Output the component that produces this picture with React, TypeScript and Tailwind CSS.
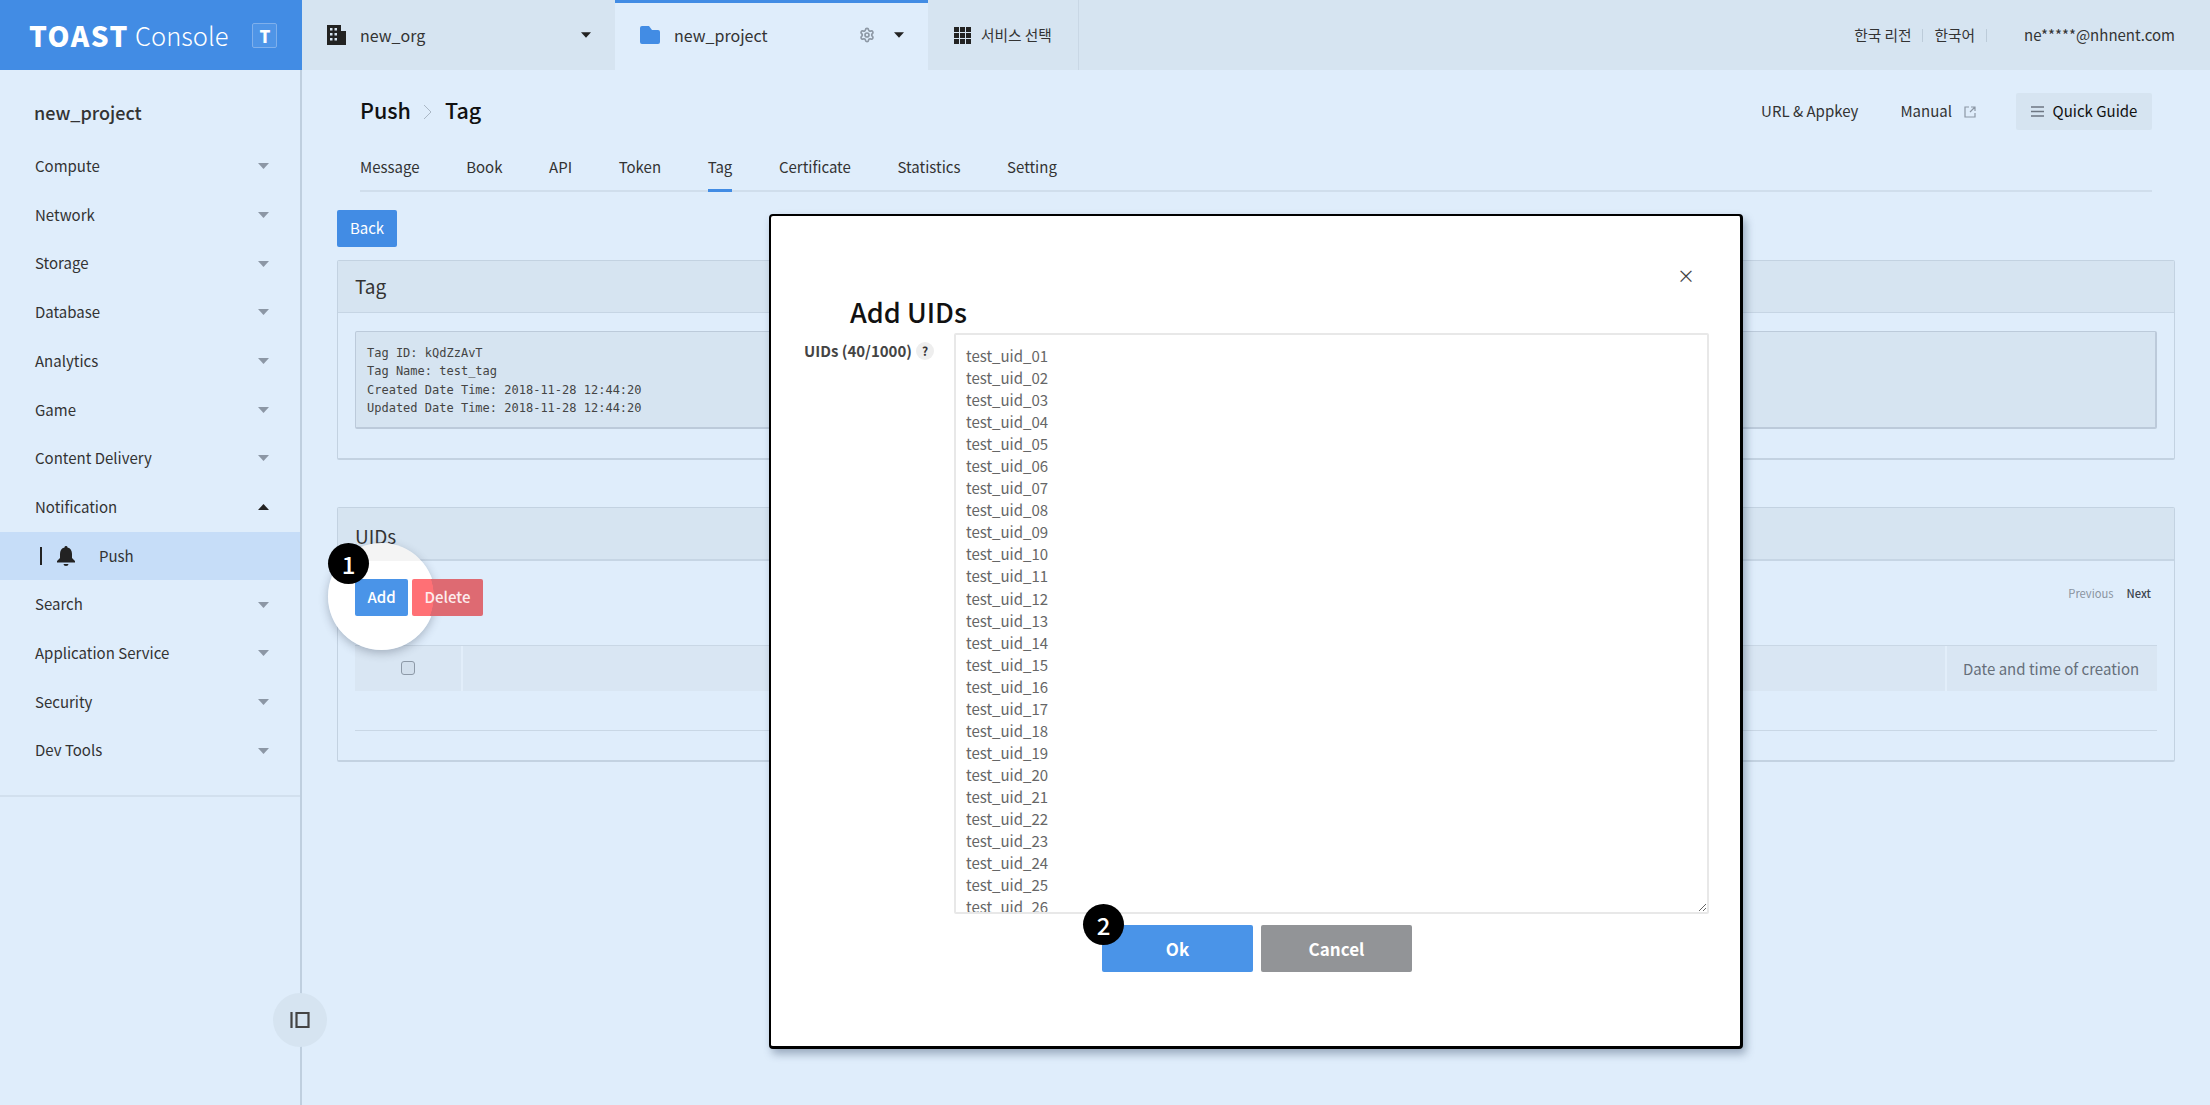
import { Settings } from "lucide-react";

const FONT = '"Noto Sans CJK KR", "Noto Sans", sans-serif';
const NAV = ["Compute", "Network", "Storage", "Database", "Analytics", "Game", "Content Delivery"];
const NAV2 = ["Search", "Application Service", "Security", "Dev Tools"];
const TABS = ["Message", "Book", "API", "Token", "Tag", "Certificate", "Statistics", "Setting"];
const UIDS = Array.from({ length: 40 }, (_, i) => `test_uid_${String(i + 1).padStart(2, "0")}`).join("\n");

function Caret({ up = false, color = "#8c97a5", w = 11, h = 6 }: { up?: boolean; color?: string; w?: number; h?: number }) {
  return (
    <svg width={w} height={h} viewBox="0 0 11 6" className="shrink-0">
      <path d={up ? "M5.5 0L11 6H0z" : "M0 0h11L5.5 6z"} fill={color} />
    </svg>
  );
}

function NavRow({ label }: { label: string }) {
  return (
    <div className="flex h-[48.7px] items-center justify-between pl-[35px] pr-[31px] text-[15px] text-[#333]">
      <span>{label}</span>
      <Caret />
    </div>
  );
}

function Badge({ n }: { n: string }) {
  return (
    <div className="flex h-[41px] w-[41px] items-center justify-center rounded-full bg-black text-[24px] font-medium text-white">
      {n}
    </div>
  );
}

export default function App() {
  return (
    <div className="relative flex h-[1105px] w-[2210px] flex-col overflow-hidden bg-[#dfedfb] text-[#333]" style={{ fontFamily: FONT }}>
      <header className="flex h-[70px] shrink-0 bg-[#d6e4f1]">
        <div className="flex w-[302px] items-center bg-[#428ce4] pl-[29px] text-white">
          <span className="w-[106px] text-[28px] leading-none font-black tracking-[1.500px]">TOAST</span>
          <span className="text-[25.5px] leading-none font-light">Console</span>
          <span className="ml-[24px] flex h-[25px] w-[25px] items-center justify-center rounded-[2px] border border-[#7fb0ec] bg-[#4f95e7] text-[17px] leading-none font-black">T</span>
        </div>
        <div className="flex w-[313px] items-center pl-[25px] pr-[24px] text-[16px]">
          <svg width="19" height="20" viewBox="0 0 19 20" className="mr-[14px]">
            <path fill="#222" d="M0 0h14v6h5v14H0z" />
            <path fill="#d6e4f1" d="M3 3h2.5v2.5H3zM7.5 3H10v2.5H7.5zM3 8h2.5v2.5H3zM7.5 8H10v2.5H7.5zM3 13h2.5v2.5H3zM7.5 13H10v2.5H7.5z" />
          </svg>
          <span className="flex-1">new_org</span>
          <Caret color="#222" w={10} h={6} />
        </div>
        <div className="flex w-[313px] items-center border-t-[3px] border-[#428ce4] bg-[#dfedfb] pl-[25px] pr-[24px] pb-[3px] text-[16px]">
          <svg width="20" height="18" viewBox="0 0 20 18" className="mr-[14px]">
            <path fill="#428ce4" d="M0 2a2 2 0 012-2h7l3 4h6a2 2 0 012 2v10a2 2 0 01-2 2H2a2 2 0 01-2-2z" />
          </svg>
          <span className="flex-1">new_project</span>
          <Settings size={16} color="#8d98a5" strokeWidth={2.500} className="mr-[19px]" />
          <Caret color="#222" w={10} h={6} />
        </div>
        <div className="flex w-[151px] items-center gap-[10px] border-r border-[#c9d7e5] pl-[26px] text-[14.7px]">
          <svg width="17" height="17" viewBox="0 0 17 17">
            <path fill="#222" d="M0 0h5v5H0zM6 0h5v5H6zM12 0h5v5h-5zM0 6h5v5H0zM6 6h5v5H6zM12 6h5v5h-5zM0 12h5v5H0zM6 12h5v5H6zM12 12h5v5h-5z" />
          </svg>
          <span>서비스 선택</span>
        </div>
        <div className="flex flex-1 items-center justify-end pr-[35px] text-[14.7px]">
          <span>한국 리전</span>
          <span className="mx-[11px] h-[13px] w-px bg-[#bccbd9]" />
          <span>한국어</span>
          <span className="ml-[11px] mr-[37px] h-[13px] w-px bg-[#bccbd9]" />
          <span className="text-[15px]">ne*****@nhnent.com</span>
        </div>
      </header>

      <div className="flex flex-1">
        <aside className="relative w-[302px] shrink-0 border-r-2 border-[#bfcfdf]">
          <div className="flex h-[67px] items-end pl-[34px] pb-[11px] text-[18px] font-medium">new_project</div>
          <div className="h-[5px]" />
          <div className="border-b-2 border-[#d2e0ee] pb-[20px]">
            {NAV.map((n) => <NavRow key={n} label={n} />)}
            <div className="flex h-[48.7px] items-center justify-between pl-[35px] pr-[31px] text-[15px]">
              <span>Notification</span>
              <Caret up color="#222" />
            </div>
            <div className="flex h-[48.7px] items-center bg-[#c6ddf8] pl-[40px] text-[15px]">
              <span className="mr-[15px] h-[18px] w-[2px] bg-[#222]" />
              <svg width="18" height="20" viewBox="0 0 18 20" className="mr-[24px]">
                <path fill="#222" d="M9 0a1.5 1.5 0 011.5 1.6C13.6 2.3 15 5 15 8v4l3 3v1.5H0V15l3-3V8c0-3 1.4-5.700 4.500-6.400A1.500 1.500 0 019 0zM6.500 18h5a2.500 2 0 01-5 0z" />
              </svg>
              <span>Push</span>
            </div>
            {NAV2.map((n) => <NavRow key={n} label={n} />)}
          </div>
          <button className="absolute left-[273px] top-[923px] flex h-[54px] w-[54px] items-center justify-center rounded-full bg-[#d6e4f1]">
            <svg width="20" height="18" viewBox="0 0 20 18">
              <path fill="none" stroke="#444" strokeWidth="2.200" d="M1.500 1v16M6.500 2h12v14h-12z" />
            </svg>
          </button>
        </aside>

        <main className="flex flex-1 flex-col px-[35px]">
          <div className="mx-[23px]">
            <div className="mt-[23px] flex h-[37px] items-center">
              <span className="-mt-[2px] text-[21.5px] font-medium text-[#111]">Push</span>
              <svg width="10" height="16" viewBox="0 0 10 16" className="ml-[12px] mr-[12px]">
                <path fill="none" stroke="#aab7c5" strokeWidth="1" d="M1 1l7 7-7 7" />
              </svg>
              <span className="-mt-[2px] text-[21.5px] font-medium text-[#111]">Tag</span>
              <div className="flex-1" />
              <span className="text-[15px]">URL &amp; Appkey</span>
              <span className="ml-[42px] text-[15px]">Manual</span>
              <svg width="12" height="12" viewBox="0 0 12 12" className="ml-[12px] mr-[40px]">
                <path fill="none" stroke="#8c97a5" strokeWidth="1.200" d="M5 1H1v10h10V7M7 1h4v4M11 1L6 6" />
              </svg>
              <div className="flex h-[37px] w-[136px] items-center justify-center gap-[9px] rounded-[2px] bg-[#d6e4f1] text-[15px] text-[#111]">
                <svg width="13" height="11" viewBox="0 0 13 11"><path stroke="#6d7682" strokeWidth="1.500" d="M0 1h13M0 5.500h13M0 10h13" /></svg>
                <span>Quick Guide</span>
              </div>
            </div>
            <nav className="flex h-[62px] items-end gap-[46.6px] border-b-2 border-[#d0deec] text-[15px]">
              {TABS.map((t) => (
                <span key={t} className={t === "Tag" ? "-mb-[2px] flex h-[48px] items-start border-b-[3px] border-[#428ce4] pt-[12px]" : "flex h-[46px] items-start pt-[12px]"}>{t}</span>
              ))}
            </nav>
          </div>

          <button className="mt-[18px] h-[37px] w-[60px] rounded-[2px] bg-[#428ce4] text-[15px] text-white">Back</button>

          <section className="mt-[13px] h-[200px] rounded-[2px] border-x border-b-2 border-[#c3d2e1] border-t">
            <div className="flex h-[52px] items-center border-b border-[#c6d5e4] bg-[#d6e4f1] pl-[17px] text-[19px] text-[#333]">Tag</div>
            <pre className="mx-[17px] mt-[18px] h-[98px] rounded-[2px] border border-b-2 border-r-2 border-[#bccada] bg-[#d6e4f1] px-[11px] pb-[10px] pt-[12px] text-[12px] leading-[18.3px] text-[#444]" style={{ fontFamily: '"DejaVu Sans Mono", monospace' }}>
{`Tag ID: kQdZzAvT
Tag Name: test_tag
Created Date Time: 2018-11-28 12:44:20
Updated Date Time: 2018-11-28 12:44:20`}
            </pre>
          </section>

          <section className="mt-[47px] h-[255px] rounded-[2px] border-x border-b-2 border-t border-[#c3d2e1]">
            <div className="flex h-[53px] items-center border-b-2 border-[#c6d5e4] bg-[#d6e4f1] pl-[17px] pt-[5px] text-[19px] text-[#333]">UIDs</div>
            <div className="relative z-10 mx-[17px] mt-[18px] flex h-[37px] items-center gap-[4px] text-[15px] font-medium text-white">
              <button className="h-[37px] w-[53px] rounded-[2px] bg-[#4a94e8]">Add</button>
              <button className="h-[37px] w-[71px] rounded-[2px] bg-[radial-gradient(circle_53px_at_-31px_17px,#ff7075_99%,#de6a72_100%)] text-[#fdeced]">Delete</button>
              <div className="flex-1" />
              <span className="mb-[8px] text-[11.2px] font-normal text-[#8a94a0]">Previous</span>
              <span className="mb-[8px] ml-[9px] mr-[6px] text-[11.2px] font-medium text-[#3c444e]">Next</span>
            </div>
            <div className="mx-[17px] mt-[29px] flex h-[46px] border-t border-[#c9d7e5] bg-[#d9e6f3]">
              <div className="flex w-[108px] items-center justify-center border-r-2 border-[#e2eefa] pb-[2px]">
                <span className="h-[14px] w-[14px] rounded-[3px] border border-[#8d99a7] bg-[#d2dfec]" />
              </div>
              <div className="flex-1" />
              <div className="flex w-[212px] items-center border-l-2 border-[#e2eefa] pl-[16px] pt-[2px] text-[15px] text-[#666f7a]">Date and time of creation</div>
            </div>
            <div className="mx-[17px] h-[40px] border-b border-[#c9d7e5]" />
          </section>
        </main>
      </div>

      {/* spotlight and step badge over the Add button */}
      <div className="absolute left-[328px] top-[543px] h-[107px] w-[107px] rounded-full bg-[linear-gradient(#f4f4f4_18px,#ffffff_18px)] shadow-[0_3px_10px_rgba(40,50,70,0.3)]" />
      <div className="absolute left-[328px] top-[543px] z-20"><Badge n="1" /></div>

      <div className="absolute left-[769px] top-[214px] z-30 flex h-[835px] w-[974px] flex-col rounded-[4px] border-2 border-b-[3px] border-r-[3px] border-black bg-white shadow-[3px_5px_8px_rgba(50,70,100,0.4)]">
        <div className="flex h-[76px] shrink-0 justify-end pr-[45px] pt-[47px] text-[18px] leading-[24px] text-[#444]">×</div>
        <div className="flex h-[41px] shrink-0 items-center pl-[79px] text-[27px] font-medium text-[#111]">Add UIDs</div>
        <div className="flex">
          <div className="flex w-[183px] shrink-0 items-start gap-[4px] pl-[33px] pt-[9px]">
            <span className="text-[15px] font-bold leading-[18px] text-[#444]">UIDs (40/1000)</span>
            <span className="flex h-[18px] w-[18px] items-center justify-center rounded-full bg-[#eeeeee] text-[12px] font-bold text-[#333]">?</span>
          </div>
          <textarea
            readOnly
            defaultValue={UIDS}
            className="h-[581px] w-[755px] resize-y overflow-hidden rounded-[2px] border-2 border-[#e8e8e8] px-[10px] py-[10px] text-[15px] leading-[22.05px] text-[#666] outline-none"
            style={{ fontFamily: FONT }}
          />
        </div>
        <div className="relative ml-[3px] mt-[11px] flex justify-center gap-[8px] font-bold text-white">
          <div className="absolute left-[309px] -top-[21px] z-10"><Badge n="2" /></div>
          <button className="h-[47px] w-[151px] rounded-[2px] bg-[#4a94e8] text-[17px]">Ok</button>
          <button className="h-[47px] w-[151px] rounded-[2px] bg-[#929497] text-[17px]">Cancel</button>
        </div>
      </div>
    </div>
  );
}
